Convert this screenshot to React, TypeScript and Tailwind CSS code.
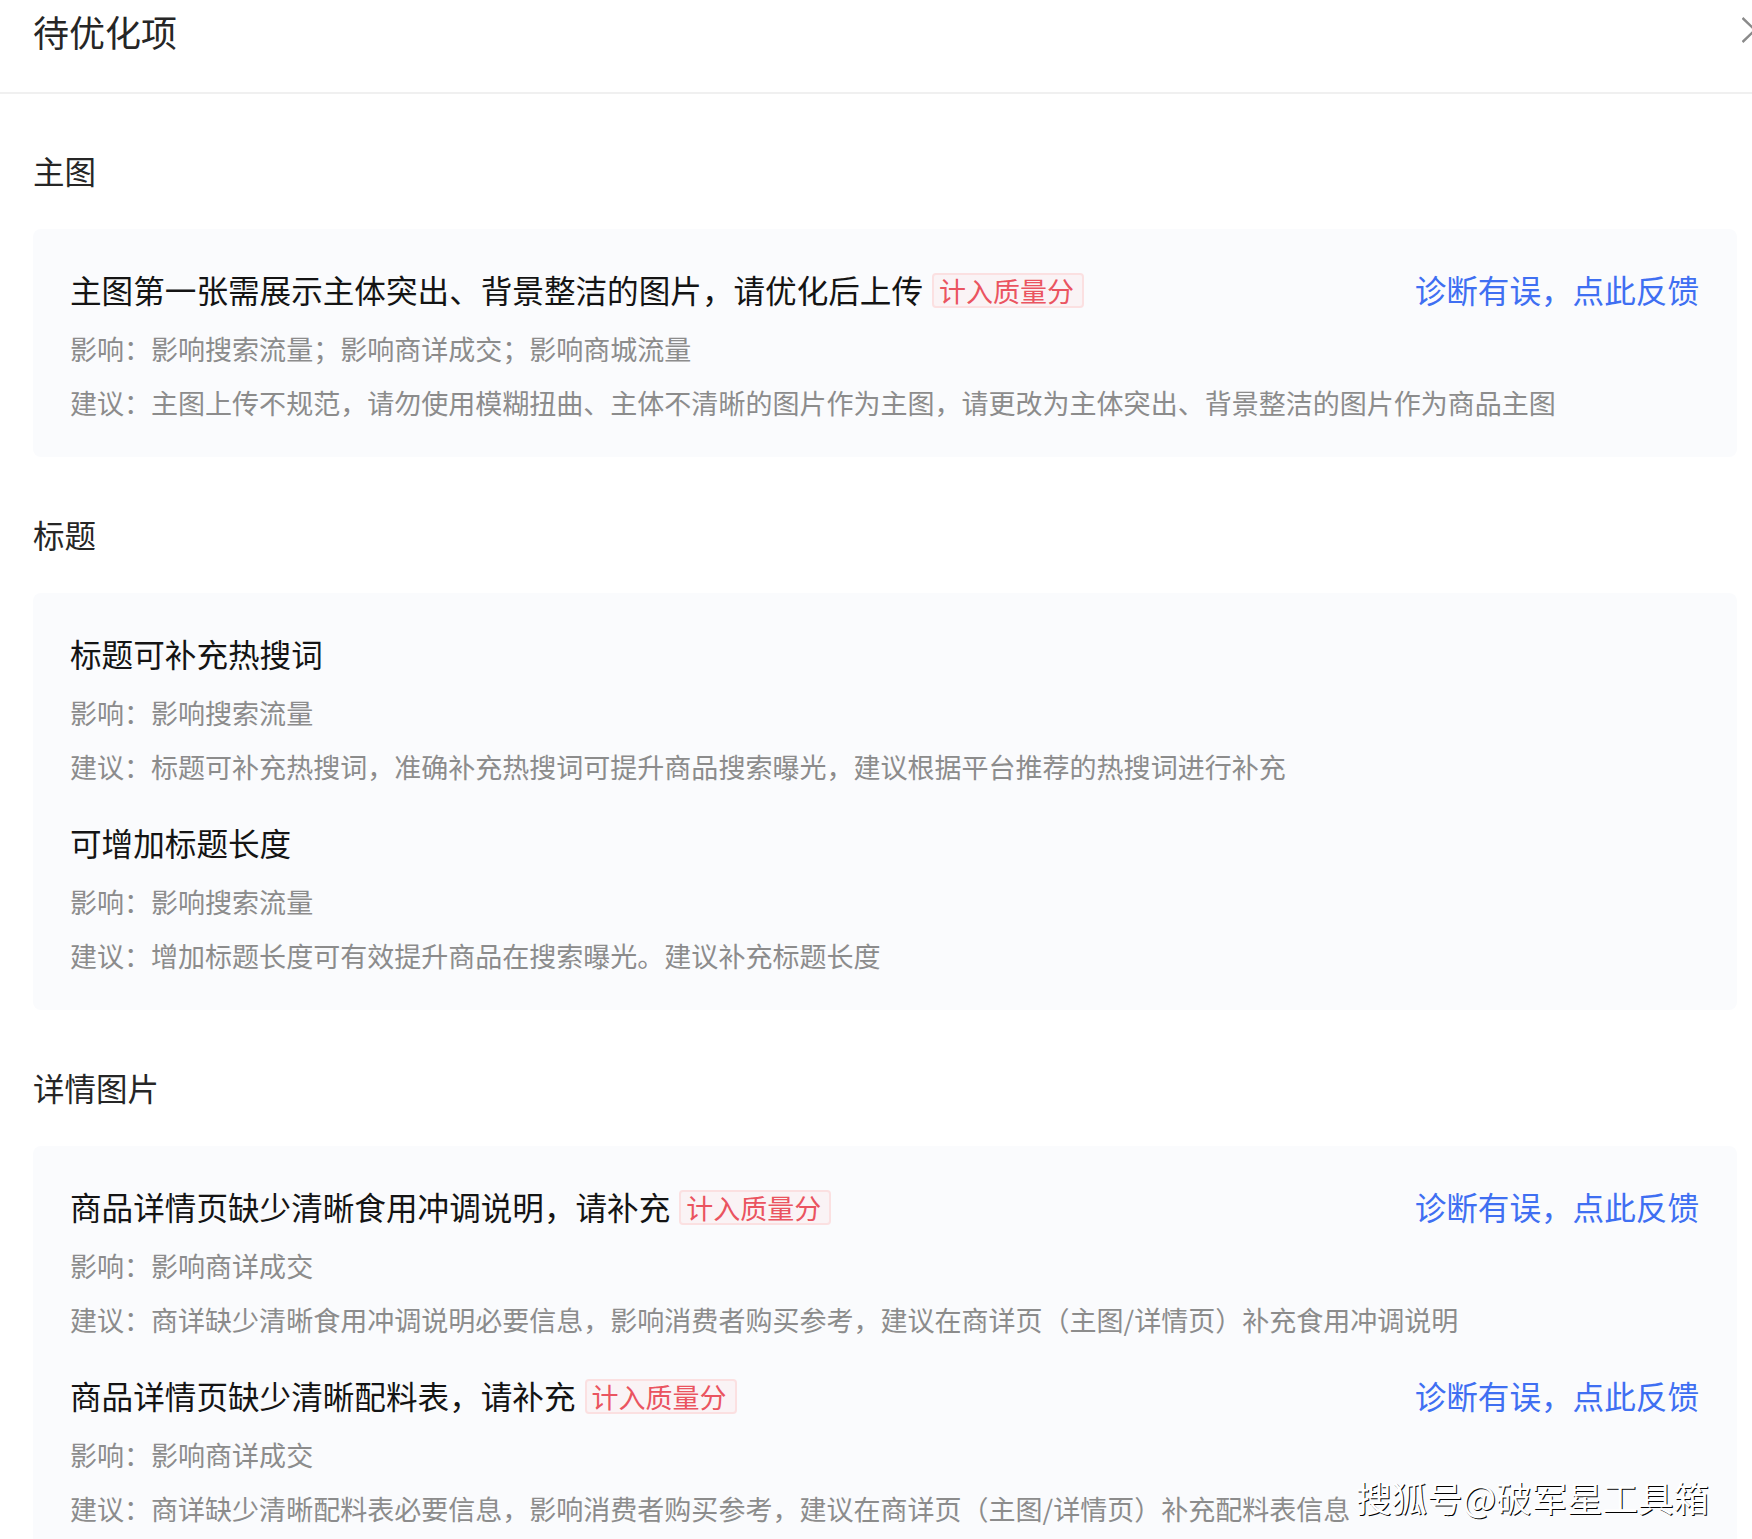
import React from 'react';

const fontStack = "font-['Noto_Sans_CJK_SC','Noto_Sans',sans-serif]";

type Item = {
  title: string;
  impact: string;
  advice: string;
  scored?: boolean;
};

type Section = {
  name: string;
  items: Item[];
};

const sections: Section[] = [
  {
    name: '主图',
    items: [
      {
        title: '主图第一张需展示主体突出、背景整洁的图片，请优化后上传',
        impact: '影响：影响搜索流量；影响商详成交；影响商城流量',
        advice: '建议：主图上传不规范，请勿使用模糊扭曲、主体不清晰的图片作为主图，请更改为主体突出、背景整洁的图片作为商品主图',
        scored: true,
      },
    ],
  },
  {
    name: '标题',
    items: [
      {
        title: '标题可补充热搜词',
        impact: '影响：影响搜索流量',
        advice: '建议：标题可补充热搜词，准确补充热搜词可提升商品搜索曝光，建议根据平台推荐的热搜词进行补充',
      },
      {
        title: '可增加标题长度',
        impact: '影响：影响搜索流量',
        advice: '建议：增加标题长度可有效提升商品在搜索曝光。建议补充标题长度',
      },
    ],
  },
  {
    name: '详情图片',
    items: [
      {
        title: '商品详情页缺少清晰食用冲调说明，请补充',
        impact: '影响：影响商详成交',
        advice: '建议：商详缺少清晰食用冲调说明必要信息，影响消费者购买参考，建议在商详页（主图/详情页）补充食用冲调说明',
        scored: true,
      },
      {
        title: '商品详情页缺少清晰配料表，请补充',
        impact: '影响：影响商详成交',
        advice: '建议：商详缺少清晰配料表必要信息，影响消费者购买参考，建议在商详页（主图/详情页）补充配料表信息',
        scored: true,
      },
    ],
  },
];

const Row: React.FC<{ item: Item }> = ({ item }) => (
  <div className="mt-[28px] first:mt-0">
    <div className="flex items-center justify-between h-[40px] mb-[13px]">
      <div className="flex items-center gap-[9px]">
        <span className="text-[31.6px] leading-[40px] text-[#141414] whitespace-nowrap">{item.title}</span>
        {item.scored && (
          <span className="h-[35px] mt-[3px] pl-[5px] pr-[8px] border-2 border-[#fbe0e1] bg-[#faf3f5] rounded-[4px] text-[27px] leading-[32px] text-[#ea5460] whitespace-nowrap">
            计入质量分
          </span>
        )}
      </div>
      {item.scored && (
        <a href="#" className="text-[31.6px] leading-[40px] text-[#3f6ff2] whitespace-nowrap">
          诊断有误，点此反馈
        </a>
      )}
    </div>
    <p className="text-[27.02px] leading-[54px] text-[#8c8c8c] whitespace-nowrap">{item.impact}</p>
    <p className="text-[27.02px] leading-[54px] text-[#8c8c8c] whitespace-nowrap">{item.advice}</p>
  </div>
);

export default function App() {
  return (
    <div className={`relative w-full h-[1539px] overflow-hidden bg-white ${fontStack}`}>
      <header className="relative h-[94px] px-[33px] border-b-2 border-[#f0f0f0]">
        <h1 className="text-[36px] leading-[62px] font-normal text-[#262626]">待优化项</h1>
        <svg className="absolute top-[17px] left-[1742px] w-[26px] h-[26px] text-[#8a8a8a]" viewBox="0 0 26 26" fill="none" stroke="currentColor" strokeWidth="2.5">
          <path d="M0.5 1L25.5 25M25.5 1L0.5 25" />
        </svg>
      </header>

      <main className="pt-[55px] pl-[33px] pr-[15px]">
        {sections.map((section) => (
          <section key={section.name} className="mb-[56px]">
            <h2 className="text-[31.5px] leading-[42px] font-normal text-[#262626] mb-[38px]">{section.name}</h2>
            <div className="bg-[#fafbfd] rounded-[8px] pt-[40px] pb-[27px] pl-[37px] pr-[38px]">
              {section.items.map((item) => (
                <Row key={item.title} item={item} />
              ))}
            </div>
          </section>
        ))}
      </main>

      <div className="absolute left-[1356px] top-[1475px] text-[35.5px] leading-[44px] text-white whitespace-nowrap [text-shadow:1px_1px_0_#000]">
        搜狐号@破军星工具箱
      </div>
    </div>
  );
}
